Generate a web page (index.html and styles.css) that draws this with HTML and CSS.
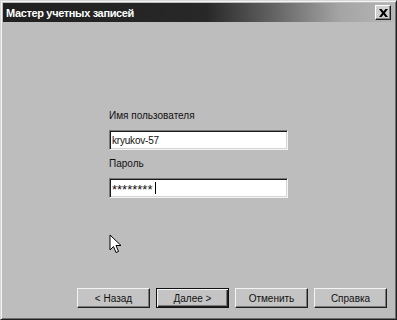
FILE: index.html
```html
<!DOCTYPE html>
<html lang="ru">

    <head>
        <meta charset="UTF-8">
        <title>Мастер учетных записей</title>
        <link rel="stylesheet" href="styles.css">
    </head>

    <body>

        <div class="window">

            <div class="title-bar">
                <span class="title-text">Мастер учетных записей</span>
                <button class="close-btn" aria-label="Закрыть">
                    <svg width="9" height="8" viewBox="0 0 9 8">
                        <path d="M0 0h2.6l1.9 2.6L6.4 0H9L5.9 4 9 8H6.4L4.5 5.4 2.6 8H0l3.1-4z" fill="#000"/>
                    </svg>
                </button>
            </div>

            <div class="content">

                <div class="form">
                    <label class="field-label" for="login">Имя пользователя</label>
                    <div class="field"><input type="text" id="login" value="kryukov-57"></div>

                    <label class="field-label" for="pass">Пароль</label>
                    <div class="field"><input type="text" id="pass" value="********"><span class="caret"></span></div>
                </div>

                <svg class="pointer" width="13" height="20" viewBox="0 0 13 20">
                    <path d="M1 1v15l3.5-3.5 2.5 6 2.5-1-2.5-6H12z" fill="#fff" stroke="#000" stroke-width="1" stroke-linejoin="miter"/>
                </svg>

                <div class="buttons">
                    <button class="btn">&lt; Назад</button>
                    <button class="btn btn-default">Далее &gt;</button>
                    <button class="btn">Отменить</button>
                    <button class="btn">Справка</button>
                </div>

            </div>

        </div>

    </body>

</html>
```

FILE: styles.css
```css
body {
    margin: 0;
    padding: 0;
    background-color: #bdbdbd;
    font-family: "Liberation Sans", Arial, sans-serif;
}

.window {
    position: relative;
    width: 397px;
    height: 320px;
    box-sizing: border-box;
    background-color: #bdbdbd;
    border-top: 1px solid #d8d8d8;
    border-left: 1px solid #d8d8d8;
    border-right: 1px solid #202020;
    border-bottom: 1px solid #202020;
    box-shadow: inset 1px 1px 0 #f4f4f4, inset -1px -1px 0 #6e6e6e;
    display: flex;
    flex-direction: column;
    padding: 2px;
}

.title-bar {
    height: 19px;
    display: flex;
    align-items: center;
    justify-content: space-between;
    padding: 0 3px 0 3px;
    background: linear-gradient(to right, #202020 0%, #282828 52%, #666 70%, #a4a4a4 86%, #b6b6b6 100%);
}

.title-text {
    color: #fff;
    font-family: "Liberation Sans", Arial, sans-serif;
    font-weight: bold;
    font-size: 11px;
    letter-spacing: -0.35px;
}

.close-btn {
    width: 16px;
    height: 15px;
    padding: 0;
    display: flex;
    align-items: center;
    justify-content: center;
    background-color: #d0d0d0;
    border: 1px solid;
    border-color: #fff #202020 #202020 #fff;
    box-shadow: inset -1px -1px 0 #808080;
}

.content {
    position: relative;
    flex: 1;
    display: flex;
    flex-direction: column;
}

.form {
    display: flex;
    flex-direction: column;
    width: 179px;
    margin: 87px 0 0 106px;
}

.field-label {
    font-size: 10px;
    line-height: 13px;
    color: #111;
    margin-bottom: 8px;
}

.field {
    position: relative;
    height: 20px;
    box-sizing: border-box;
    background-color: #fff;
    border: 1px solid;
    border-color: #7a7a7a #f4f4f4 #f4f4f4 #7a7a7a;
    box-shadow: inset 1px 1px 0 #1a1a1a, inset -1px -1px 0 #d6d6d6;
    margin-bottom: 7px;
    display: flex;
    align-items: center;
}

.field input {
    border: none;
    outline: none;
    background: transparent;
    font-family: "Liberation Sans", Arial, sans-serif;
    font-size: 10px;
    letter-spacing: -0.2px;
    color: #111;
    padding: 0 0 0 2px;
    width: 150px;
}

#pass {
    width: 43px;
    font-size: 13px;
    letter-spacing: 0;
    padding-top: 3px;
}

.caret {
    width: 1px;
    height: 12px;
    background-color: #000;
}

.pointer {
    position: absolute;
    left: 106px;
    top: 212px;
}

.buttons {
    margin-top: auto;
    display: flex;
    gap: 6px;
    padding: 0 0 9px 74px;
}

.btn {
    width: 73px;
    height: 20px;
    padding: 0;
    box-sizing: border-box;
    font-family: "Liberation Sans", Arial, sans-serif;
    font-size: 10px;
    color: #111;
    background-color: #c4c4c4;
    border: 1px solid;
    border-color: #f4f4f4 #202020 #202020 #f4f4f4;
    box-shadow: inset -1px -1px 0 #7a7a7a;
}

.btn-default {
    border: 1px solid #111;
    box-shadow: inset 1px 1px 0 #f4f4f4, inset -1px -1px 0 #202020, inset -2px -2px 0 #7a7a7a;
}
```
